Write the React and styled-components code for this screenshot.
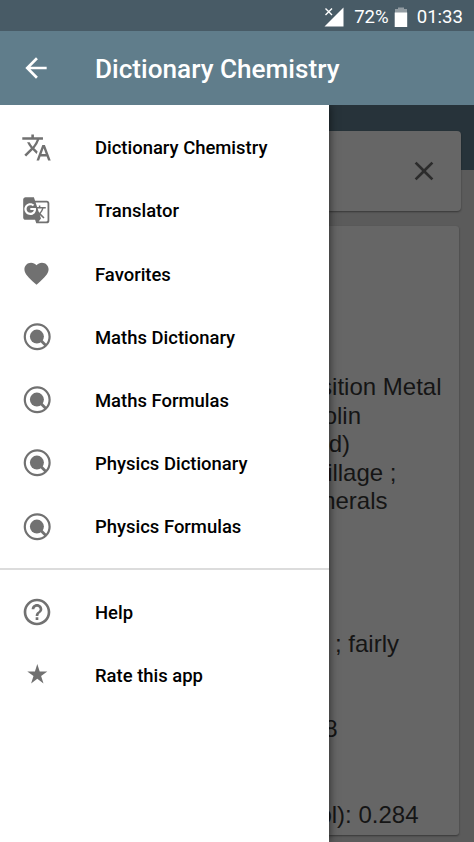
import React from "react";
import styled, { createGlobalStyle } from "styled-components";
import {
  MdArrowBack,
  MdClose,
  MdFavorite,
  MdGTranslate,
  MdHelpOutline,
  MdTranslate,
} from "react-icons/md";

const GlobalStyle = createGlobalStyle`
  body {
    margin: 0;
    overflow: hidden;
    background: #5b5b5b;
  }

  * {
    box-sizing: border-box;
  }
`;

const Screen = styled.div`
  display: flex;
  flex-direction: column;
  width: 474px;
  height: 842px;
  overflow: hidden;
  font-family: Roboto, sans-serif;
`;

const StatusBar = styled.div`
  display: flex;
  align-items: center;
  justify-content: flex-end;
  height: 31px;
  padding: 2px 11px 0 0;
  background: #485b66;
  color: #fff;
  font-size: 18.6px;
  flex-shrink: 0;

  .signal {
    margin-right: 10px;
  }

  .battery {
    margin: 0 9px 0 5px;
  }
`;

const AppBar = styled.header`
  display: flex;
  align-items: center;
  height: 74px;
  padding-left: 20px;
  background: #607d8b;
  color: #fff;
  flex-shrink: 0;

  svg {
    margin-top: -1px;
  }

  h1 {
    margin: 2px 0 0 43px;
    font-size: 26.15px;
    font-weight: 500;
    white-space: nowrap;
  }
`;

const Content = styled.div`
  display: flex;
  flex: 1;
  min-height: 0;
`;

const Drawer = styled.nav`
  width: 329px;
  padding-top: 10.8px;
  background: #fff;
  box-shadow: 0 0 9px rgba(0, 0, 0, 0.65);
  z-index: 1;
  flex-shrink: 0;
  clip-path: inset(0 -20px 0 0);
`;

const MenuItem = styled.a`
  display: flex;
  align-items: center;
  height: 63.2px;
  color: #000;
  font-size: 18.45px;
  font-weight: 500;
  white-space: nowrap;
`;

const ItemIcon = styled.span`
  display: flex;
  align-items: center;
  justify-content: center;
  width: 32px;
  margin: 0 42.5px 0 20.5px;
  color: #717171;
  flex-shrink: 0;

  svg {
    width: ${(props) => props.$size || 32}px;
    height: ${(props) => props.$size || 32}px;
  }
`;

const ItemLabel = styled.span`
  padding-top: 1.6px;
`;

const Divider = styled.div`
  height: 2px;
  margin: 9.6px 0 10.8px;
  background: #dcdcdc;
`;

const Page = styled.main`
  display: flex;
  flex-direction: column;
  flex: 1;
  min-width: 0;
  padding-top: 26px;
  background: linear-gradient(#27333a 65.5px, #5b5b5b 65.5px);
`;

const SearchCard = styled.div`
  display: flex;
  align-items: center;
  justify-content: flex-end;
  width: 132px;
  height: 80px;
  padding-right: 21px;
  border-radius: 0 4px 4px 0;
  background: #666;
  box-shadow: 0 1px 2px rgba(0, 0, 0, 0.4);
  color: #2c2c2c;
`;

const ArticleCard = styled.article`
  width: 130px;
  height: 609px;
  margin-top: 15px;
  padding-top: 147.3px;
  background: #666;
  border-radius: 0 3px 3px 0;
  box-shadow: 0 1px 2px rgba(0, 0, 0, 0.4);
  color: #151515;
  font-family: "Liberation Sans", sans-serif;
  font-size: 24px;
`;

const Line = styled.div`
  display: flex;
  justify-content: flex-end;
  width: ${(props) => props.$end}px;
  height: 28.5px;
  line-height: 28.5px;
  white-space: pre;
`;

const lines = [
  { text: "sition Metal", end: 112.5 },
  { text: "olin", end: 32 },
  { text: "d)", end: 21 },
  { text: "illage ;", end: 67.5 },
  { text: "nerals", end: 58.5 },
  {},
  {},
  {},
  {},
  { text: "; fairly", end: 70 },
  {},
  {},
  { text: "8", end: 8.5 },
  {},
  {},
  { text: "ol): 0.284", end: 89.5 },
];

function SignalIcon() {
  return (
    <svg className="signal" width="20" height="20" viewBox="0 0 20 20">
      <path d="M19.5 0.5V19.5H0.5Z" fill="#fff" />
      <path
        d="M1.5 1.5L8 8M8 1.5L1.5 8"
        stroke="#485b66"
        strokeWidth="3.5"
      />
      <path d="M1.5 1.5L8 8M8 1.5L1.5 8" stroke="#fff" strokeWidth="1.4" />
    </svg>
  );
}

function BatteryIcon() {
  return (
    <svg className="battery" width="14" height="20" viewBox="0 0 14 20">
      <path d="M4 0.5H10V2H13V6H1V2H4Z" fill="#929ca2" />
      <path d="M0.7 5.5H13.2V20H0.7Z" fill="#fff" />
    </svg>
  );
}

function DictionaryIcon() {
  return (
    <svg viewBox="0 0 32 32" fill="none" stroke="currentColor">
      <circle cx="16.2" cy="15.8" r="12.4" strokeWidth="2.2" />
      <circle cx="15.9" cy="15.6" r="7" fill="currentColor" stroke="none" />
      <path d="M18.4 18L24.6 24.2" strokeWidth="2.8" />
    </svg>
  );
}

function StarIcon() {
  return (
    <svg viewBox="0 0 32 32" fill="currentColor">
      <path d="M16.3 5L18.7 12.4H26.3L20.1 17L22.5 24.4L16.3 19.8L10.1 24.4L12.5 17L6.3 12.4H13.9Z" />
    </svg>
  );
}

const mainItems = [
  { label: "Dictionary Chemistry", icon: MdTranslate, size: 31 },
  { label: "Translator", icon: MdGTranslate, size: 28.5 },
  { label: "Favorites", icon: MdFavorite, size: 29 },
  { label: "Maths Dictionary", icon: DictionaryIcon },
  { label: "Maths Formulas", icon: DictionaryIcon },
  { label: "Physics Dictionary", icon: DictionaryIcon },
  { label: "Physics Formulas", icon: DictionaryIcon },
];

const extraItems = [
  { label: "Help", icon: MdHelpOutline },
  { label: "Rate this app", icon: StarIcon },
];

function MenuList({ items }) {
  return items.map(({ label, icon: Icon, size }) => (
    <MenuItem key={label}>
      <ItemIcon $size={size}>
        <Icon />
      </ItemIcon>
      <ItemLabel>{label}</ItemLabel>
    </MenuItem>
  ));
}

export default function App() {
  return (
    <>
      <GlobalStyle />
      <Screen>
        <StatusBar>
          <SignalIcon />
          <span>72%</span>
          <BatteryIcon />
          <span>01:33</span>
        </StatusBar>
        <AppBar>
          <MdArrowBack size={32} />
          <h1>Dictionary Chemistry</h1>
        </AppBar>
        <Content>
          <Drawer>
            <MenuList items={mainItems} />
            <Divider />
            <MenuList items={extraItems} />
          </Drawer>
          <Page>
            <SearchCard>
              <MdClose size={32} />
            </SearchCard>
            <ArticleCard>
              {lines.map((line, i) => (
                <Line key={i} $end={line.end}>
                  {line.text}
                </Line>
              ))}
            </ArticleCard>
          </Page>
        </Content>
      </Screen>
    </>
  );
}
